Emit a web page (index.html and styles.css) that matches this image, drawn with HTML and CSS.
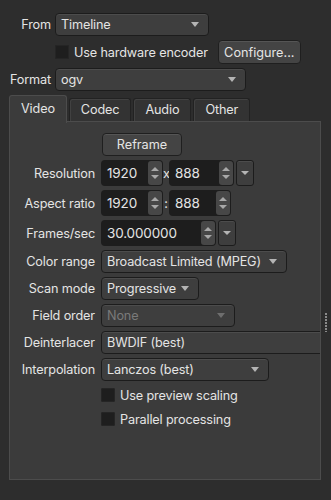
FILE: index.html
```html
<!DOCTYPE html>
<html lang="en">
<head>
  <meta charset="UTF-8">
  <title>Export Video</title>
  <link rel="stylesheet" href="styles.css">
</head>
<body>
  <div class="window">
    <div class="source-form">
      <span class="label">From</span>
      <div class="combo w-timeline"><span>Timeline</span><i class="caret"></i></div>
      <span></span>
      <div class="hw-row">
        <label class="check"><span class="box"></span>Use hardware encoder</label>
        <button class="btn configure">Configure...</button>
      </div>
      <span class="label">Format</span>
      <div class="combo w-format"><span>ogv</span><i class="caret"></i></div>
    </div>

    <div class="tabs">
      <div class="tab active">Video</div>
      <div class="tab">Codec</div>
      <div class="tab">Audio</div>
      <div class="tab">Other</div>
    </div>
    <div class="panel">
      <div class="video-form">
        <span></span>
        <div><button class="btn reframe">Reframe</button></div>

        <span class="label">Resolution</span>
        <div class="field-row">
          <div class="spin w-res1"><span>1920</span><span class="arrows"></span></div>
          <span class="sep">x</span>
          <div class="spin w-res2"><span>888</span><span class="arrows"></span></div>
          <div class="drop"><i class="caret"></i></div>
        </div>

        <span class="label">Aspect ratio</span>
        <div class="field-row">
          <div class="spin w-res1"><span>1920</span><span class="arrows"></span></div>
          <span class="sep">:</span>
          <div class="spin w-asp2"><span>888</span><span class="arrows"></span></div>
        </div>

        <span class="label">Frames/sec</span>
        <div class="field-row">
          <div class="spin w-fps"><span>30.000000</span><span class="arrows"></span></div>
          <div class="drop"><i class="caret"></i></div>
        </div>

        <span class="label">Color range</span>
        <div class="combo w-color"><span>Broadcast Limited (MPEG)</span><i class="caret"></i></div>

        <span class="label">Scan mode</span>
        <div class="combo w-scan"><span>Progressive</span><i class="caret"></i></div>

        <span class="label">Field order</span>
        <div class="combo w-field disabled"><span>None</span><i class="caret"></i></div>

        <span class="label">Deinterlacer</span>
        <div class="combo w-deint"><span>BWDIF (best)</span></div>

        <span class="label">Interpolation</span>
        <div class="combo w-interp"><span>Lanczos (best)</span><i class="caret"></i></div>

        <span></span>
        <label class="check tall"><span class="box"></span>Use preview scaling</label>

        <span></span>
        <label class="check tall"><span class="box"></span>Parallel processing</label>
      </div>
    </div>
  </div>
  <div class="grip"></div>
</body>
</html>
```

FILE: styles.css
```css
body {
  margin: 0;
  background: #2d2d2d;
  color: #e4e4e4;
  font-family: Inter, "Noto Sans", sans-serif;
  font-size: 12.7px;
  letter-spacing: -0.15px;
  width: 331px;
  height: 500px;
  overflow: hidden;
  position: relative;
}
.window {
  padding: 13px 0 0 9px;
}
.source-form {
  display: grid;
  grid-template-columns: 42px auto;
  column-gap: 4px;
  row-gap: 4px;
  align-items: center;
  justify-items: start;
}
.label {
  justify-self: end;
  white-space: nowrap;
}
.hw-row {
  display: flex;
  align-items: center;
  gap: 10px;
  height: 24px;
}
.check {
  display: flex;
  align-items: center;
  gap: 5px;
  white-space: nowrap;
}
.check.tall {
  height: 20px;
}
.box {
  width: 14px;
  height: 14px;
  background: #1e1e1e;
  border-radius: 2px;
  box-shadow: inset 0 0 0 1px #252525;
}
.btn {
  font: inherit;
  color: #e4e4e4;
  background: #444;
  border: 1px solid #1f1f1f;
  border-radius: 4px;
  box-shadow: inset 0 1px 0 #555;
  padding: 0;
}
.configure {
  width: 83px;
  height: 24px;
}
.combo {
  box-sizing: border-box;
  height: 23px;
  display: flex;
  align-items: center;
  justify-content: space-between;
  padding: 0 9px 0 5px;
  background: #3e3e3e;
  border: 1px solid #1c1c1c;
  border-radius: 4px;
  box-shadow: inset 0 1px 0 #4c4c4c;
  white-space: nowrap;
}
.combo.disabled {
  color: #7a7a7a;
}
.combo.disabled .caret {
  border-top-color: #6e6e6e;
}
.caret {
  width: 0;
  height: 0;
  border-left: 4px solid transparent;
  border-right: 4px solid transparent;
  border-top: 5px solid #b4b4b4;
}
.w-timeline { width: 154px; }
.w-format { width: 191px; }

.tabs {
  display: flex;
  align-items: flex-end;
  margin-top: 4px;
  height: 27px;
  position: relative;
  z-index: 1;
}
.tab {
  box-sizing: border-box;
  height: 23px;
  padding: 3px 11px 0;
  background: #333;
  border: 1px solid #222;
  border-bottom: none;
  border-radius: 3px 3px 0 0;
  box-shadow: inset 1px 1px 0 #414141;
  margin-bottom: 1px;
}
.tab.active {
  height: 28px;
  margin-bottom: -1px;
  padding: 5px 11px 0;
  background: #3b3b3b;
  border-color: #4c4c4c;
  box-shadow: none;
}
.tab + .tab { margin-left: 2px; }
.panel {
  box-sizing: border-box;
  width: 312px;
  height: 359px;
  margin-top: -1px;
  background: #3b3b3b;
  border: 1px solid #4c4c4c;
  overflow: hidden;
  padding-top: 11px;
}
.video-form {
  display: grid;
  grid-template-columns: 85px auto;
  column-gap: 6px;
  row-gap: 4px;
  align-items: center;
  justify-items: start;
}
.reframe {
  width: 80px;
  height: 23px;
  margin-left: 1px;
}
.field-row {
  display: flex;
  align-items: center;
}
.sep {
  width: 6px;
  text-align: center;
}
.spin {
  box-sizing: border-box;
  height: 26px;
  display: flex;
  align-items: center;
  justify-content: space-between;
  padding-left: 6px;
  background: #1d1d1d;
  border-radius: 4px;
  font-size: 13.5px;
}
.arrows {
  position: relative;
  width: 14px;
  height: 24px;
  margin-right: 1px;
  background: #474747;
  border-radius: 3px;
}
.arrows::before,
.arrows::after {
  content: '';
  position: absolute;
  left: 3px;
  border-left: 4px solid transparent;
  border-right: 4px solid transparent;
}
.arrows::before {
  top: 6px;
  border-bottom: 4px solid #a8a8a8;
}
.arrows::after {
  bottom: 6px;
  border-top: 4px solid #a8a8a8;
}
.w-res1 { width: 62px; }
.w-res2 { width: 65px; }
.w-asp2 { width: 62px; }
.w-fps { width: 115px; }
.drop {
  box-sizing: border-box;
  width: 18px;
  height: 26px;
  margin-left: 2px;
  display: flex;
  align-items: center;
  justify-content: center;
  background: #3e3e3e;
  border: 1px solid #1c1c1c;
  border-radius: 3px;
  box-shadow: inset 0 1px 0 #4c4c4c;
}
.drop .caret {
  border-top-width: 4px;
}
.w-color { width: 186px; }
.w-scan { width: 98px; }
.w-field { width: 134px; }
.w-deint { width: 230px; }
.w-interp { width: 168px; }
.grip {
  position: absolute;
  left: 325px;
  top: 313px;
  width: 2px;
  height: 19px;
  background: repeating-linear-gradient(#8a8a8a 0 2px, transparent 2px 3px);
}
```
